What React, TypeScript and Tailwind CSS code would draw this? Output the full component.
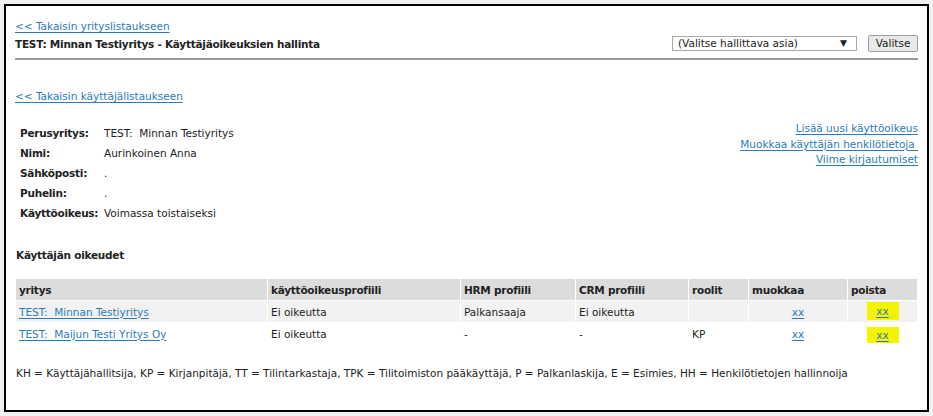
import React from 'react';

const link = 'text-[#2b7bb9] underline underline-offset-2';

const info: Array<[string, string]> = [
  ['Perusyritys:', 'TEST:  Minnan Testiyritys'],
  ['Nimi:', 'Aurinkoinen Anna'],
  ['Sähköposti:', '.'],
  ['Puhelin:', '.'],
  ['Käyttöoikeus:', 'Voimassa toistaiseksi'],
];

const columns = [
  { name: 'yritys', w: 'w-[251px]' },
  { name: 'käyttöoikeusprofiili', w: 'w-[192px]' },
  { name: 'HRM profiili', w: 'w-[114px]' },
  { name: 'CRM profiili', w: 'w-[112px]' },
  { name: 'roolit', w: 'w-[59px]' },
  { name: 'muokkaa', w: 'w-[98px]' },
  { name: 'poista', w: 'w-[69px]' },
];

const rows = [
  { company: 'TEST:  Minnan Testiyritys', profile: 'Ei oikeutta', hrm: 'Palkansaaja', crm: 'Ei oikeutta', roles: '', bg: 'bg-[#f2f2f2]', mark: 'h-[18px] -mt-[3px]' },
  { company: 'TEST:  Maijun Testi Yritys Oy', profile: 'Ei oikeutta', hrm: '-', crm: '-', roles: 'KP', bg: 'bg-white', mark: 'h-[16px] mt-[2px]' },
];

const bold = 'font-bold tracking-[-0.25px]';

export default function App() {
  return (
    <div className="bg-[#f0f0f0] p-1 h-[416px] text-[10.5px] text-[#222] font-['DejaVu_Sans','Liberation_Sans',sans-serif]">
      <div className="h-[408px] w-[925px] border-2 border-black bg-white pl-[9px] pr-[9px] pt-[13px]">
        {/* top header */}
        <div className="leading-[14px]">
          <a className={link} href="#">&lt;&lt; Takaisin yrityslistaukseen</a>
        </div>
        <div className="flex items-center justify-between h-[19px] mt-[1px]">
          <div className={`${bold} leading-[14px]`}>TEST: Minnan Testiyritys - Käyttäjäoikeuksien hallinta</div>
          <div className="flex items-center gap-[11px]">
            <div className="w-[185px] h-[15px] border border-[#a9a9a9] flex items-center justify-between pl-[5px] pr-[9px] leading-[13px]">
              <span>(Valitse hallittava asia)</span>
              <span className="text-[9px]">▼</span>
            </div>
            <button className="w-[50px] h-[17px] border border-[#a0a0a0] rounded-[2px] bg-[#e9e9e9] leading-[13px]">Valitse</button>
          </div>
        </div>
        <div className="mt-[5px] h-[2px] bg-[#9a9a9a]" />

        <div className="mt-[29px] leading-[14px]">
          <a className={link} href="#">&lt;&lt; Takaisin käyttäjälistaukseen</a>
        </div>

        {/* user info */}
        <div className="flex justify-between mt-[18px]">
          <div className="pl-[5px] pt-[5px]">
            {info.map(([label, value]) => (
              <div key={label} className="flex h-[20px] leading-[14px]">
                <span className={`w-[84px] ${bold}`}>{label}</span>
                <span className="whitespace-pre">{value}</span>
              </div>
            ))}
          </div>
          <div className="flex flex-col items-end leading-[15.5px]">
            <a className={link} href="#">Lisää uusi käyttöoikeus</a>
            <a className={`${link} whitespace-pre`} href="#">Muokkaa käyttäjän henkilötietoja </a>
            <a className={link} href="#">Viime kirjautumiset</a>
          </div>
        </div>

        <div className={`mt-[22px] pl-px ${bold} leading-[14px]`}>Käyttäjän oikeudet</div>

        {/* rights table */}
        <table className="mt-[16px] border-separate border-spacing-[1px] leading-[14px]">
          <thead>
            <tr className="bg-[#dcdcdc]">
              {columns.map((c) => (
                <th key={c.name} className={`${c.w} h-[21px] px-[3px] text-left ${bold}`}>{c.name}</th>
              ))}
            </tr>
          </thead>
          <tbody>
            {rows.map((r) => (
              <tr key={r.company} className={r.bg}>
                <td className="h-[21px] px-[3px]">
                  <a className={`${link} whitespace-pre`} href="#">{r.company}</a>
                </td>
                <td className="px-[3px]">{r.profile}</td>
                <td className="px-[3px]">{r.hrm}</td>
                <td className="px-[3px]">{r.crm}</td>
                <td className="px-[3px]">{r.roles}</td>
                <td className="px-[3px] text-center">
                  <a className={link} href="#">xx</a>
                </td>
                <td className="px-[3px] text-center">
                  <span className={`inline-flex w-[32px] items-center justify-center bg-[#f4f400] ${r.mark}`}>
                    <a className={link} href="#">xx</a>
                  </span>
                </td>
              </tr>
            ))}
          </tbody>
        </table>

        <div className="mt-[21px] pl-px leading-[14px]">
          KH = Käyttäjähallitsija, KP = Kirjanpitäjä, TT = Tilintarkastaja, TPK = Tilitoimiston pääkäyttäjä, P = Palkanlaskija, E = Esimies, HH = Henkilötietojen hallinnoija
        </div>
      </div>
    </div>
  );
}
